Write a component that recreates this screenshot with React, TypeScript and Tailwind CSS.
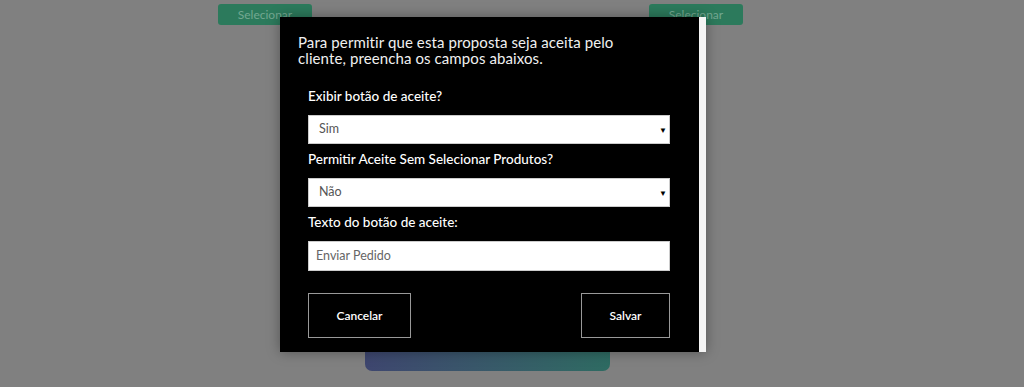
import { ReactNode } from "react";

const FONT = { fontFamily: "Lato, 'Open Sans', sans-serif" };

function Field({ label, children }: { label: string; children: ReactNode }) {
  return (
    <div className="flex flex-col">
      <label className="text-[13.5px] font-medium text-white leading-[16px] h-[16px] mb-[11px]">
        {label}
      </label>
      {children}
    </div>
  );
}

function FakeSelect({ value }: { value: string }) {
  return (
    <div className="flex items-center justify-between h-[29px] bg-white border border-[#ccc] pl-[10px] pr-[2px]">
      <span className="text-[12.5px] text-[#555]">{value}</span>
      <span className="text-[8px] text-black">▼</span>
    </div>
  );
}

export default function App() {
  return (
    <div className="relative w-[1024px] h-[387px] overflow-hidden bg-[#808080]" style={FONT}>
      <div className="flex justify-between pl-[218px] pr-[281px] pt-[4px]">
        <button className="w-[94px] h-[21px] rounded-[3px] bg-[#2c7a5c] text-[12px] text-[#73a891]">
          Selecionar
        </button>
        <button className="w-[94px] h-[21px] rounded-[3px] bg-[#2c7a5c] text-[12px] text-[#73a891]">
          Selecionar
        </button>
      </div>
      <div className="flex pl-[365px] mt-[300px]">
        <div className="w-[245px] h-[46px] rounded-b-[7px] bg-gradient-to-r from-[#3e466f] to-[#2e6b62]" />
      </div>

      <div className="absolute left-[280px] top-[17px] flex shadow-[0_0_12px_rgba(0,0,0,0.35)]">
        <div className="w-[419px] h-[335px] bg-black pt-[17px]">
          <p className="pl-[18px] pr-[10px] text-[15px] leading-[16px] text-[#f0f0f0] tracking-[0.1px]">
            Para permitir que esta proposta seja aceita pelo
            <br />
            cliente, preencha os campos abaixos.
          </p>
          <div className="flex flex-col gap-[7px] pl-[28px] pr-[29px] mt-[22px]">
            <Field label="Exibir botão de aceite?">
              <FakeSelect value="Sim" />
            </Field>
            <Field label="Permitir Aceite Sem Selecionar Produtos?">
              <FakeSelect value="Não" />
            </Field>
            <Field label="Texto do botão de aceite:">
              <div className="flex items-center h-[30px] bg-white border border-[#ccc] pl-[7px]">
                <span className="text-[12.5px] text-[#666]">Enviar Pedido</span>
              </div>
            </Field>
          </div>
          <div className="flex justify-between pl-[28px] pr-[29px] mt-[22px]">
            <button className="w-[103px] h-[45px] border border-[#999] text-[12px] font-semibold text-white">
              Cancelar
            </button>
            <button className="w-[89px] h-[45px] border border-[#999] text-[12px] font-semibold text-white">
              Salvar
            </button>
          </div>
        </div>
        <div className="w-[7px] h-[335px] bg-[#f4f4f4]" />
      </div>
    </div>
  );
}
